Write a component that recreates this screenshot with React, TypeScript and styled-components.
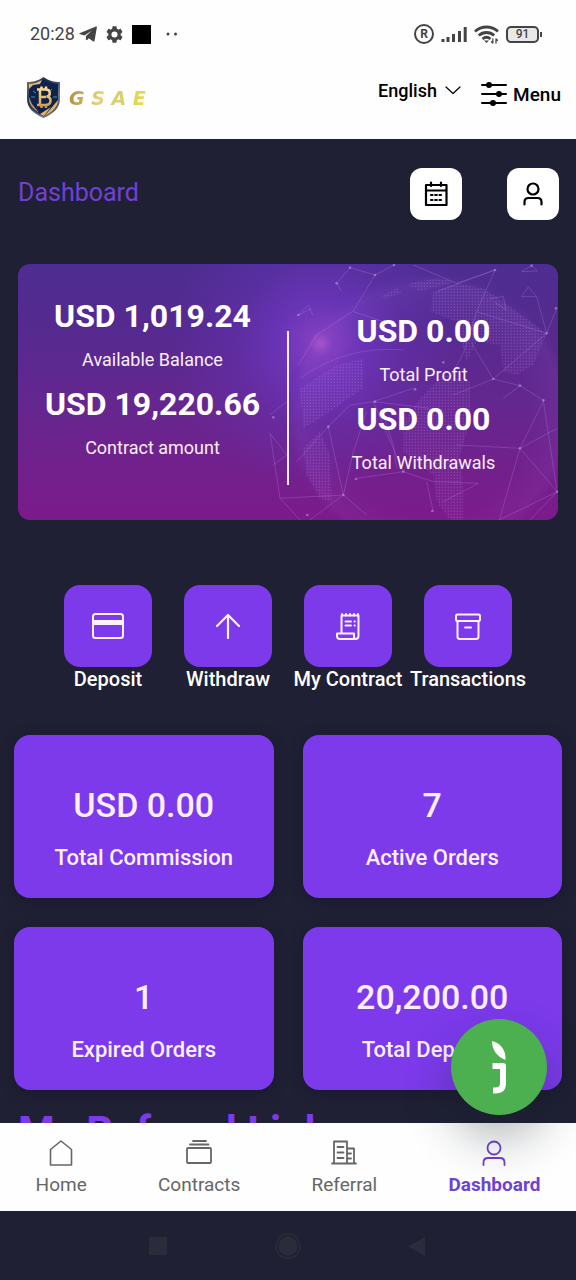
import React from "react";
import styled, { createGlobalStyle } from "styled-components";

const color = {
  night: "#1f2034",
  violet: "#7c3aeb",
  accent: "#6f42d3",
  ink: "#000000",
  status: "#444444",
  muted: "#666666",
  soft: "#fbeeff",
};

const GlobalStyle = createGlobalStyle`
  * { box-sizing: border-box; }
  body {
    margin: 0;
    background: ${color.night};
    font-family: Roboto, "Liberation Sans", sans-serif;
  }
  h1, h2, p { margin: 0; }
  button, select { font: inherit; }
`;

const Screen = styled.div`
  position: relative;
  display: flex;
  flex-direction: column;
  height: 100vh;
  background: ${color.night};
`;

const StatusBar = styled.div`
  display: flex;
  flex-shrink: 0;
  justify-content: space-between;
  align-items: center;
  height: 68px;
  padding: 0 37px 0 30px;
  background: #fefefe;
  color: ${color.status};
`;

const StatusGroup = styled.div<{ $gap: number }>`
  display: flex;
  align-items: center;
  gap: ${(p) => p.$gap}px;
`;

const Clock = styled.time`
  font-size: 18px;
  line-height: 24px;
`;

const Registered = styled.span`
  display: grid;
  place-items: center;
  width: 20px;
  height: 20px;
  border: 2px solid ${color.status};
  border-radius: 50%;
  font-size: 12px;
  font-weight: 700;
  line-height: 12px;
`;

const Battery = styled.span`
  position: relative;
  display: grid;
  place-items: center;
  width: 33px;
  height: 17px;
  border: 2px solid ${color.status};
  border-radius: 5px;
  background: #e8e8e8;
  font-size: 12px;
  font-weight: 500;
  line-height: 12px;

  &::after {
    content: "";
    position: absolute;
    right: -5px;
    width: 2px;
    height: 5px;
    background: ${color.status};
  }
`;

const Header = styled.header`
  display: flex;
  flex-shrink: 0;
  justify-content: space-between;
  align-items: flex-start;
  height: 71px;
  padding: 9px 15px 0 26px;
  background: #fefefe;
`;

const Brand = styled.a`
  display: flex;
  align-items: center;
  gap: 8px;
  text-decoration: none;
`;

const BrandName = styled.span`
  background: linear-gradient(100deg, #b08a3a 0%, #e3d27a 40%, #d9cf6c 65%, #f0d93f 100%);
  background-clip: text;
  -webkit-background-clip: text;
  color: transparent;
  font-family: "DejaVu Sans", sans-serif;
  font-size: 19px;
  font-style: italic;
  font-weight: 700;
  line-height: 28px;
`;

const Controls = styled.div`
  display: flex;
  align-items: flex-start;
  gap: 20px;
  color: ${color.ink};
  font-weight: 500;
`;

const LanguageField = styled.label`
  position: relative;
  display: flex;
  align-items: center;
  height: 26px;
  font-size: 18px;

  svg {
    position: absolute;
    right: 0;
    pointer-events: none;
  }
`;

const LanguageSelect = styled.select`
  appearance: none;
  height: 26px;
  padding: 0 24px 0 0;
  border: 0;
  background: transparent;
  color: inherit;
`;

const MenuButton = styled.button`
  display: flex;
  align-items: center;
  gap: 6px;
  height: 34px;
  padding: 0;
  border: 0;
  background: transparent;
  color: inherit;
  font-size: 19px;
`;

const Main = styled.main`
  flex: 1;
  min-height: 0;
  overflow-y: auto;
  scrollbar-width: none;
  padding-top: 29px;
`;

const TitleRow = styled.div`
  display: flex;
  justify-content: space-between;
  align-items: flex-start;
  padding: 0 17px 0 18px;
`;

const Title = styled.h1`
  color: ${color.accent};
  font-size: 25px;
  font-weight: 400;
  line-height: 50px;
`;

const Shortcuts = styled.div`
  display: flex;
  gap: 45px;
`;

const IconButton = styled.button`
  display: grid;
  place-items: center;
  width: 52px;
  height: 52px;
  padding: 0;
  border: 0;
  border-radius: 12px;
  background: #ffffff;
  color: ${color.ink};
`;

const BalanceCard = styled.section`
  position: relative;
  display: grid;
  grid-template-columns: 1fr 2px 1fr;
  margin: 44px 18px 0;
  border-radius: 12px;
  overflow: hidden;
  background:
    radial-gradient(circle at 56% 31%, #a653c8 0, rgba(142, 68, 206, 0.75) 12px, rgba(118, 58, 208, 0.6) 42px, rgba(104, 52, 190, 0.35) 85px, rgba(90, 46, 170, 0) 150px),
    linear-gradient(180deg, #4e2d91 0%, #552a8f 25%, #67268f 58%, #741f8b 84%, #7c1a8c 100%);
`;

const GlobeLayer = styled.svg`
  position: absolute;
  inset: 0;
  width: 100%;
  height: 100%;
`;

const BalanceColumn = styled.div<{ $lower?: boolean }>`
  position: relative;
  padding: ${(p) => (p.$lower ? "45px 0 35px" : "30px 0 50px")};
  text-align: center;
`;

const Divider = styled.div`
  position: relative;
  margin: 67px 0 35px;
  background: #f6ecff;
`;

const Amount = styled.p`
  color: #ffffff;
  font-size: 32px;
  font-weight: 700;
  line-height: 44px;
`;

const AmountLabel = styled.p`
  color: ${color.soft};
  font-size: 18px;
  line-height: 44px;
`;

const Actions = styled.div`
  display: flex;
  justify-content: center;
  gap: 32px;
  margin-top: 65px;
`;

const Action = styled.button`
  display: flex;
  flex-direction: column;
  align-items: center;
  width: 88px;
  padding: 0;
  border: 0;
  background: transparent;
  color: #ffffff;
  font-size: 20px;
  font-weight: 500;
  line-height: 24px;
  white-space: nowrap;
`;

const ActionTile = styled.span`
  display: grid;
  place-items: center;
  width: 88px;
  height: 82px;
  border-radius: 16px;
  background: ${color.violet};
  color: #fdf0ff;
`;

const Stats = styled.section`
  display: grid;
  grid-template-columns: 1fr 1fr;
  gap: 29px;
  margin-top: 44px;
  padding: 0 14px;
`;

const StatCard = styled.article`
  display: flex;
  flex-direction: column;
  gap: 15px;
  padding: 48px 0 24px;
  border-radius: 16px;
  background: ${color.violet};
  box-shadow: 0 2px 12px rgba(20, 22, 44, 0.6);
  color: ${color.soft};
  text-align: center;
`;

const StatValue = styled.p`
  font-size: 34px;
  font-weight: 500;
  line-height: 44px;
`;

const StatLabel = styled.p`
  font-size: 22px;
  font-weight: 500;
  line-height: 32px;
`;

const SectionTitle = styled.h2`
  margin: 16px 18px 24px;
  color: ${color.violet};
  font-size: 42px;
  font-weight: 700;
  line-height: 52px;
`;

const TabBar = styled.nav`
  display: flex;
  flex-shrink: 0;
  justify-content: space-around;
  height: 88px;
  padding-top: 17px;
  background: #fefefe;
`;

const Tab = styled.a<{ $active?: boolean }>`
  display: flex;
  flex-direction: column;
  align-items: center;
  gap: 6px;
  color: ${(p) => (p.$active ? color.accent : color.muted)};
  font-size: 19px;
  font-weight: ${(p) => (p.$active ? 700 : 400)};
  line-height: 26px;
  text-decoration: none;
`;

const SystemBar = styled.div`
  display: flex;
  flex-shrink: 0;
  justify-content: center;
  align-items: center;
  gap: 104px;
  height: 69px;
  color: #2b2c3b;
`;

const ChatButton = styled.button`
  position: absolute;
  right: 29px;
  bottom: 165px;
  display: grid;
  place-items: center;
  width: 96px;
  height: 96px;
  padding: 0;
  border: 0;
  border-radius: 50%;
  background: #4caf50;
  box-shadow: 0 24px 48px rgba(20, 30, 40, 0.32);
`;

type IconProps = { w: number; h: number; sw?: number; children: React.ReactNode };

const Icon = ({ w, h, sw = 2, children }: IconProps) => (
  <svg
    width={w}
    height={h}
    viewBox={`0 0 ${w} ${h}`}
    fill="none"
    stroke="currentColor"
    strokeWidth={sw}
    strokeLinecap="round"
    strokeLinejoin="round"
    aria-hidden="true"
  >
    {children}
  </svg>
);

const TelegramIcon = () => (
  <Icon w={18} h={16} sw={0}>
    <path d="M.5 7.200 17 .600c.6-.2 1 .1.900.7L15.600 14.600c-.2.900-.9 1.200-1.700.600L9.800 12.300 8 14.200l-1.200-.6.200-3.600 6-5.400-7.600 4.800-4.900-1.300Z" fill="currentColor" />
  </Icon>
);

const GearIcon = () => (
  <svg width="17" height="17" viewBox="2 2 20 20" fill="currentColor" aria-hidden="true">
    <path d="M19.14 12.94c.04-.3.06-.61.06-.94 0-.32-.02-.64-.07-.94l2.030-1.580c.18-.14.23-.41.12-.61l-1.920-3.320c-.12-.22-.37-.29-.59-.22l-2.390.96c-.5-.38-1.030-.7-1.620-.94L14.400 2.810c-.04-.24-.24-.41-.48-.41h-3.840c-.24 0-.43.17-.47.41L9.250 5.350c-.59.24-1.130.57-1.620.94l-2.390-.96c-.22-.08-.47 0-.59.22L2.740 8.870c-.12.21-.08.47.12.61l2.030 1.580c-.05.3-.09.63-.09.94s.02.64.07.94l-2.030 1.580c-.18.14-.23.41-.12.61l1.920 3.320c.12.22.37.29.59.22l2.390-.96c.5.38 1.030.7 1.620.94l.36 2.540c.05.24.24.41.48.41h3.840c.24 0 .44-.17.47-.41l.36-2.540c.59-.24 1.130-.56 1.620-.94l2.390.96c.22.08.47 0 .59-.22l1.920-3.320c.12-.22.07-.47-.12-.61l-2.010-1.580zM12 15.600A3.600 3.600 0 1 1 12 8.400a3.600 3.600 0 0 1 0 7.200z" />
  </svg>
);

const BlackSquare = styled.span`
  width: 19px;
  height: 19px;
  background: ${color.ink};
`;

const DotsIcon = () => (
  <Icon w={12} h={4} sw={0}>
    <circle cx="2" cy="2" r="1.500" fill="currentColor" />
    <circle cx="9.500" cy="2" r="1.500" fill="currentColor" />
  </Icon>
);

const SignalIcon = () => (
  <Icon w={26} h={17} sw={3}>
    <path d="M2 16v-3M7 16v-5M12.500 16V8M18.500 16V5M24.200 16V1" strokeLinecap="butt" />
  </Icon>
);

const WifiIcon = () => (
  <Icon w={25} h={19} sw={2.8}>
    <path d="M1 6.500c6.500-6 16.500-6 23 0M4.800 10.500c4.200-4 11.200-4 15.400 0M8.500 14c2.500-2.200 5.500-2.200 8 0" strokeLinecap="butt" />
    <path d="M10 15.500h5L12.500 18Z" fill="currentColor" stroke="none" />
    <path d="M18.800 14v4l-1.300-1.300M22 18v-4l1.500 1.300" strokeWidth="1.300" />
  </Icon>
);

const ShieldLogo = () => (
  <svg width="35" height="41" viewBox="0 0 35 41" aria-hidden="true">
    <defs>
      <linearGradient id="shieldRim" x1="0" y1="0" x2="1" y2="1">
        <stop offset="0" stopColor="#8f7c5a" />
        <stop offset=".35" stopColor="#1a2d57" />
        <stop offset=".7" stopColor="#77749a" />
        <stop offset="1" stopColor="#3a3028" />
      </linearGradient>
      <linearGradient id="shieldGold" x1="0" y1="0" x2="0" y2="1">
        <stop offset="0" stopColor="#ffe2a0" />
        <stop offset="1" stopColor="#d3974a" />
      </linearGradient>
    </defs>
    <path d="M17.500 0C12 4 7 5 1 5v17c0 9 7 15 16.500 19C27 37 34 31 34 22V5C28 5 23 4 17.500 0Z" fill="url(#shieldRim)" />
    <path d="M17.500 2C12 5.500 8 6.500 3 6.700V22c0 7.500 6 13.300 14.500 17C26 35.300 32 29.500 32 22V6.700C27 6.500 23 5.500 17.500 2Z" fill="#0f2348" />
    <path d="M3 6.700C8 6.500 12 5.500 16 3l-2 4-7 1-4 4Z" fill="#d9bd85" />
    <path d="m3 20 3 7 7 8.500C7 32 3 28 3 22Z" fill="#b9935a" />
    <path d="M32 23 19 38.500c7-3 13-9 13-15.500ZM25 30l-7 9-4-2Z" fill="#e0b467" />
    <path d="M5 20h4m18 0h4m-24-6 3 2m13-1 3-3" stroke="#4b8cab" strokeWidth="1" />
    <path d="M11 12.500h8.500c5.500 0 5.500 6.500 1 7 5.500.8 5.500 8.500-1 8.500H11M14 12.500V28M14 20h6M15.500 9.500v3M20 9.500v3M15.500 28v3M20 28v3" fill="none" stroke="url(#shieldGold)" strokeWidth="2.500" />
  </svg>
);

const ChevronIcon = () => (
  <Icon w={16} h={9} sw={1.2}>
    <path d="m1 1 7 6.500L15 1" />
  </Icon>
);

const SlidersIcon = () => (
  <Icon w={26} h={24} sw={2}>
    <path d="M1 3h24M1 12h24M1 21h24" />
    <g fill="currentColor" stroke="none">
      <circle cx="8" cy="3" r="3" />
      <circle cx="18" cy="12" r="3" />
      <circle cx="12" cy="21" r="3" />
    </g>
  </Icon>
);

const CalendarIcon = () => (
  <Icon w={24} h={26} sw={2.2}>
    <path d="M2 4h20.500v20H2ZM2 9.500h20M7 1.500V5M17 1.500V5" />
    <path d="M7 14h1.500M11.200 14h1.600M15.500 14H17M7 19h1.500M11.200 19h1.600M15.500 19H17" />
  </Icon>
);

const UserIcon = () => (
  <Icon w={24} h={26} sw={1.8}>
    <circle cx="12" cy="8" r="6.500" />
    <path d="M1.500 25v-2.500c0-3 1.500-4.500 4.500-4.500h12c3 0 4.500 1.500 4.500 4.500V25" />
  </Icon>
);

const ProfileIcon = () => (
  <Icon w={20} h={24} sw={2.2}>
    <circle cx="10" cy="7" r="5.500" />
    <path d="M1.500 22.500V20c0-2.500 1.300-4 4-4h9c2.700 0 4 1.500 4 4v2.500" />
  </Icon>
);

const CardIcon = () => (
  <Icon w={32} h={26} sw={2}>
    <rect x="1" y="1" width="30" height="24" rx="2.500" />
    <path d="M2 9.500h28" strokeWidth="5" strokeLinecap="butt" />
  </Icon>
);

const ArrowUpIcon = () => (
  <Icon w={26} h={26} sw={2.2}>
    <path d="M13 25V2M2 13 13 2l11 11" />
  </Icon>
);

const ReceiptIcon = () => (
  <Icon w={24} h={27} sw={2}>
    <path d="M5.500 20.500V2.500h17V23c0 1.800-1 3-3 3H4c-2 0-3-1.500-3-3v-2.500h17V24c0 1.200.8 2 2 2" />
    <path d="M6 2.500V1M10 2.500V1M14 2.500V1M18 2.500V1M22 2.500V1M9.500 8.500h5.500M9.500 12.500h5.500M18.500 8.500h.3M18.500 12.500h.3" />
  </Icon>
);

const ArchiveIcon = () => (
  <Icon w={26} h={27} sw={2}>
    <rect x="1" y="1.500" width="24" height="6.500" rx="1.500" />
    <path d="M2.500 8v15.500c0 1.500.8 2.500 2.500 2.500h16c1.700 0 2.500-1 2.500-2.500V8M10 14.500h6" />
  </Icon>
);

const HomeIcon = () => (
  <Icon w={24} h={26} sw={1.6}>
    <path d="M1.500 25V9.500L12 1l10.500 8.500V25Z" />
  </Icon>
);

const StackIcon = () => (
  <Icon w={26} h={26} sw={1.8}>
    <rect x="1" y="8" width="24" height="15" rx="1" />
    <path d="M4 4.500h18.500M7 1h13" />
  </Icon>
);

const BuildingIcon = () => (
  <Icon w={26} h={26} sw={1.8}>
    <path d="M1 23.500h24M3 23.500v-22h13v22M16 8.500h7v15M6.500 7h6M6.500 12.500h6M6.500 18h6M16 13.500h4M16 18.500h4" />
  </Icon>
);

const LeafMark = () => (
  <svg width="16" height="54" viewBox="0 0 16 54" aria-hidden="true">
    <path d="M1 1c8 2 14 8 13.500 19C7 17 1 11 1 1Z" fill="#fff" />
    <path d="M1.500 26h10.500v17c0 5-2.500 7.500-7.500 7.500H2" fill="none" stroke="#fff" strokeWidth="6" strokeLinejoin="round" />
  </svg>
);

const globeLines = [
  "M200 85 240 38 315 60 372 30M315 60 250 168 140 240 85 330M200 85 215 110",
  "M85 180 115 150 128 180M85 180 125 160M675 45 620 170 580 295 540 370M675 45 560 85 430 30M675 45 500 110",
  "M755 50 785 32 802 48ZM775 95 800 125 755 125ZM800 125 830 235M660 130 700 125 708 165 675 142",
  "M860 160 830 235 670 372 605 265M830 235 620 170M670 372 550 420M670 372 750 392 820 436 860 700",
  "M750 392 700 430M750 580 820 440M750 580 862 520M750 580 560 570M750 580 688 795M750 580 862 710 688 795M862 710 780 795",
  "M0 535 30 730 90 795M0 535 50 600 10 630M175 515 220 720 120 795M175 515 80 620M175 515 240 450 310 440 480 460",
  "M220 720 250 590 290 470M220 720 290 780M220 720 30 730M310 440 400 650 260 670M310 440 430 400M400 650 490 680 625 685 520 740",
  "M380 640 370 570 340 480M490 770 470 680M250 170 340 200M0 480 50 440",
];

const globeNodes = [
  [200, 85], [240, 38], [315, 60], [372, 30], [85, 180], [675, 45], [785, 32], [830, 235],
  [858, 160], [670, 372], [750, 392], [820, 436], [750, 580], [862, 710], [175, 515], [220, 720],
  [400, 650], [315, 440], [435, 403], [487, 768], [258, 672], [112, 780], [520, 322], [10, 487],
];

const land = [
  "M480 170 490 110 560 85 640 100 700 140 830 235 790 330 740 360 700 350 690 270 620 260 590 320 560 200Z",
  "M400 500 450 430 520 360 600 380 600 500 570 600 580 700 580 795 540 795 500 740 490 660 400 590Z",
  "M100 580 150 530 180 600 185 740 150 730 110 660Z",
  "M90 400 200 330 280 310 280 400 180 470 100 520Z",
  "M325 130 380 98 395 115 350 130ZM410 88 500 70 560 80 450 108Z",
];

const Globe = () => (
  <GlobeLayer viewBox="0 0 540 256" preserveAspectRatio="xMaxYMid slice" aria-hidden="true">
    <defs>
      <pattern id="dots" width="9" height="9" patternUnits="userSpaceOnUse">
        <circle cx="4" cy="4" r="2.400" fill="#cf9df5" />
      </pattern>
      <radialGradient id="rim">
        <stop offset=".7" stopColor="#a86be0" stopOpacity="0" />
        <stop offset=".93" stopColor="#a86be0" stopOpacity=".09" />
        <stop offset="1" stopColor="#a86be0" stopOpacity="0" />
      </radialGradient>
    </defs>
    <g transform="translate(252 -9) scale(.3333)">
      <circle cx="480" cy="480" r="425" fill="url(#rim)" />
      {land.map((d) => (
        <g key={d}>
          <path d={d} fill="#a86be0" opacity=".06" />
          <path d={d} fill="url(#dots)" opacity=".24" />
        </g>
      ))}
      <path d="M90 370Q230 270 400 285" stroke="#b884e8" strokeWidth="3" fill="none" opacity=".25" />
      {globeLines.map((d) => (
        <path key={d} d={d} stroke="#c795ee" strokeWidth="3" fill="none" opacity=".25" />
      ))}
      {globeNodes.map(([x, y]) => (
        <circle key={`${x}-${y}`} cx={x} cy={y} r="4" fill="#d7b0f5" opacity=".45" />
      ))}
    </g>
  </GlobeLayer>
);

const actions = [
  { label: "Deposit", icon: <CardIcon /> },
  { label: "Withdraw", icon: <ArrowUpIcon /> },
  { label: "My Contract", icon: <ReceiptIcon /> },
  { label: "Transactions", icon: <ArchiveIcon /> },
];

const stats = [
  { value: "USD 0.00", label: "Total Commission" },
  { value: "7", label: "Active Orders" },
  { value: "1", label: "Expired Orders" },
  { value: "20,200.00", label: "Total Deposits" },
];

const tabs = [
  { label: "Home", icon: <HomeIcon /> },
  { label: "Contracts", icon: <StackIcon /> },
  { label: "Referral", icon: <BuildingIcon /> },
  { label: "Dashboard", icon: <UserIcon />, active: true },
];

export default function App() {
  return (
    <>
      <GlobalStyle />
      <Screen>
        <StatusBar>
          <StatusGroup $gap={15}>
            <StatusGroup $gap={4}>
              <Clock>20:28</Clock>
              <StatusGroup $gap={9}>
                <TelegramIcon />
                <GearIcon />
                <BlackSquare />
              </StatusGroup>
            </StatusGroup>
            <DotsIcon />
          </StatusGroup>
          <StatusGroup $gap={7}>
            <Registered>R</Registered>
            <SignalIcon />
            <WifiIcon />
            <Battery>91</Battery>
          </StatusGroup>
        </StatusBar>

        <Header>
          <Brand href="#">
            <ShieldLogo />
            <BrandName>G S A E</BrandName>
          </Brand>
          <Controls>
            <LanguageField>
              <LanguageSelect aria-label="Language" defaultValue="English">
                <option>English</option>
              </LanguageSelect>
              <ChevronIcon />
            </LanguageField>
            <MenuButton type="button">
              <SlidersIcon />
              Menu
            </MenuButton>
          </Controls>
        </Header>

        <Main>
          <TitleRow>
            <Title>Dashboard</Title>
            <Shortcuts>
              <IconButton type="button" aria-label="Calendar">
                <CalendarIcon />
              </IconButton>
              <IconButton type="button" aria-label="Profile">
                <ProfileIcon />
              </IconButton>
            </Shortcuts>
          </TitleRow>

          <BalanceCard>
            <Globe />
            <BalanceColumn>
              <Amount>USD 1,019.24</Amount>
              <AmountLabel>Available Balance</AmountLabel>
              <Amount>USD 19,220.66</Amount>
              <AmountLabel>Contract amount</AmountLabel>
            </BalanceColumn>
            <Divider />
            <BalanceColumn $lower>
              <Amount>USD 0.00</Amount>
              <AmountLabel>Total Profit</AmountLabel>
              <Amount>USD 0.00</Amount>
              <AmountLabel>Total Withdrawals</AmountLabel>
            </BalanceColumn>
          </BalanceCard>

          <Actions>
            {actions.map(({ label, icon }) => (
              <Action key={label} type="button">
                <ActionTile>{icon}</ActionTile>
                {label}
              </Action>
            ))}
          </Actions>

          <Stats>
            {stats.map(({ value, label }) => (
              <StatCard key={label}>
                <StatValue>{value}</StatValue>
                <StatLabel>{label}</StatLabel>
              </StatCard>
            ))}
          </Stats>

          <SectionTitle>My Referral Link</SectionTitle>
        </Main>

        <TabBar>
          {tabs.map(({ label, icon, active }) => (
            <Tab key={label} href="#" $active={active}>
              {icon}
              {label}
            </Tab>
          ))}
        </TabBar>

        <SystemBar>
          <Icon w={26} h={26} sw={0}>
            <rect x="4" y="4" width="18" height="18" fill="currentColor" />
          </Icon>
          <Icon w={26} h={26} sw={1.5}>
            <circle cx="13" cy="13" r="12" />
            <circle cx="13" cy="13" r="9" fill="currentColor" />
          </Icon>
          <Icon w={26} h={26} sw={0}>
            <path d="M20 4v19L3 13.500Z" fill="currentColor" />
          </Icon>
        </SystemBar>

        <ChatButton type="button" aria-label="Open chat">
          <LeafMark />
        </ChatButton>
      </Screen>
    </>
  );
}
